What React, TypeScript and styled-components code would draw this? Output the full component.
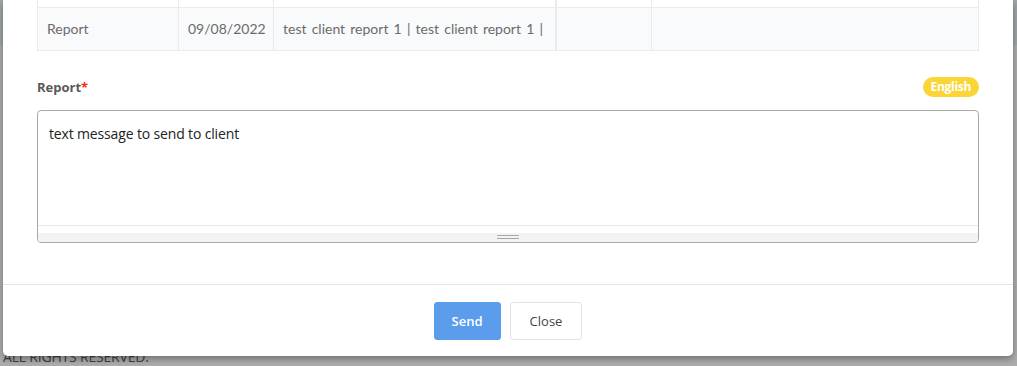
import React from "react";
import styled, { createGlobalStyle } from "styled-components";

const Global = createGlobalStyle`
  html, body { margin: 0; padding: 0; }
  body {
    width: 1017px;
    height: 366px;
    overflow: hidden;
    background: linear-gradient(#9ea6a7 0, #9ea6a7 45px, #adadad 45px, #adadad 100%);
    font-family: Lato, "Open Sans", sans-serif;
  }
`;

const Page = styled.div`
  padding: 0 4px 0 3px;
`;

const Modal = styled.div`
  position: relative;
  z-index: 2;
  width: 1010px;
  background: #ffffff;
  border-radius: 0 0 5px 5px;
  box-shadow: 0 3px 7px rgba(0, 0, 0, 0.35);
`;

const Body = styled.div`
  padding: 0 34px 41px 34px;
`;

const Table = styled.table`
  width: 941px;
  border-collapse: collapse;
  table-layout: fixed;
  font-size: 14px;
  color: #6b6b6b;
`;

const Row = styled.tr<{ $stub?: boolean }>`
  background: ${(p) => (p.$stub ? "#ffffff" : "#f9fafb")};
  height: ${(p) => (p.$stub ? "7px" : "43px")};
`;

const Cell = styled.td<{ $thick?: boolean; $stub?: boolean }>`
  box-sizing: border-box;
  padding: ${(p) => (p.$stub ? "0" : "0 9px")};
  border: 1px solid #ebebeb;
  border-top: ${(p) => (p.$stub ? "none" : "1px solid #ebebeb")};
  border-left: ${(p) => (p.$thick ? "2px" : "1px")} solid #ebebeb;
  white-space: nowrap;
  overflow: hidden;
  vertical-align: middle;
  line-height: 20px;
  word-spacing: 1.6px;
`;

const Col = styled.col<{ $w: number }>`
  width: ${(p) => p.$w}px;
`;

const FieldHeader = styled.div`
  margin-top: 26px;
  display: flex;
  align-items: center;
  justify-content: space-between;
  height: 20px;
`;

const Label = styled.label`
  font-family: "Open Sans", sans-serif;
  font-weight: 700;
  font-size: 13px;
  color: #5a5a5a;
`;

const Required = styled.span`
  color: #ff1f1f;
`;

const Badge = styled.span`
  display: inline-flex;
  align-items: center;
  height: 20px;
  padding: 0 8px;
  border-radius: 10px;
  background: #fbd535;
  color: #ffffff;
  font-family: "Open Sans", sans-serif;
  font-weight: 700;
  font-size: 12px;
  letter-spacing: -0.3px;
`;

const Editor = styled.div`
  margin-top: 13px;
  height: 131px;
  border: 1px solid #a9a9a9;
  border-radius: 4px;
  display: flex;
  flex-direction: column;
  overflow: hidden;
`;

const EditorText = styled.div`
  flex: 1;
  padding: 13px 11px 0;
  font-family: "Open Sans", sans-serif;
  font-size: 14px;
  letter-spacing: -0.15px;
  color: #222;
  border-bottom: 1px solid #e8e8e8;
`;

const Gap = styled.div`
  height: 7px;
  background: #ffffff;
`;

const ResizeBar = styled.div`
  height: 9px;
  background: #f3f3f3;
  display: flex;
  justify-content: center;
  align-items: center;
`;

const Grip = styled.div`
  width: 22px;
  height: 2px;
  border-top: 1px solid #a8a8a8;
  border-bottom: 1px solid #a8a8a8;
`;

const Footer = styled.div`
  border-top: 1px solid #e4e4e4;
  padding: 17px 0 16px;
  display: flex;
  justify-content: center;
  gap: 9px;
`;

const Button = styled.button<{ $primary?: boolean }>`
  height: 38px;
  padding: 0 ${(p) => (p.$primary ? "17px" : "19px")};
  border-radius: 3px;
  font-family: "Open Sans", sans-serif;
  font-size: 13px;
  font-weight: ${(p) => (p.$primary ? 600 : 400)};
  background: ${(p) => (p.$primary ? "#5b9dec" : "#ffffff")};
  color: ${(p) => (p.$primary ? "#ffffff" : "#444444")};
  border: 1px solid ${(p) => (p.$primary ? "#5b9dec" : "#e3e3e3")};
  cursor: pointer;
`;

const Copyright = styled.div`
  position: relative;
  z-index: 1;
  margin-top: -7px;
  font-family: "Open Sans", sans-serif;
  font-size: 14px;
  letter-spacing: -0.2px;
  color: #3f3f3f;
  line-height: 16px;
`;

const widths = [141, 95, 282, 96, 327];

export default function App() {
  return (
    <>
      <Global />
      <Page>
        <Modal>
          <Body>
            <Table>
              <colgroup>
                {widths.map((w, i) => (
                  <Col key={i} $w={w} />
                ))}
              </colgroup>
              <tbody>
                <Row $stub>
                  {widths.map((_, i) => (
                    <Cell key={i} $stub $thick={i === 3} />
                  ))}
                </Row>
                <Row>
                  <Cell>Report</Cell>
                  <Cell>09/08/2022</Cell>
                  <Cell>test client report 1 | test client report 1 |</Cell>
                  <Cell $thick></Cell>
                  <Cell></Cell>
                </Row>
              </tbody>
            </Table>
            <FieldHeader>
              <Label>
                Report<Required>*</Required>
              </Label>
              <Badge>English</Badge>
            </FieldHeader>
            <Editor>
              <EditorText>text message to send to client</EditorText>
              <Gap />
              <ResizeBar>
                <Grip />
              </ResizeBar>
            </Editor>
          </Body>
          <Footer>
            <Button $primary>Send</Button>
            <Button>Close</Button>
          </Footer>
        </Modal>
        <Copyright>ALL RIGHTS RESERVED.</Copyright>
      </Page>
    </>
  );
}
